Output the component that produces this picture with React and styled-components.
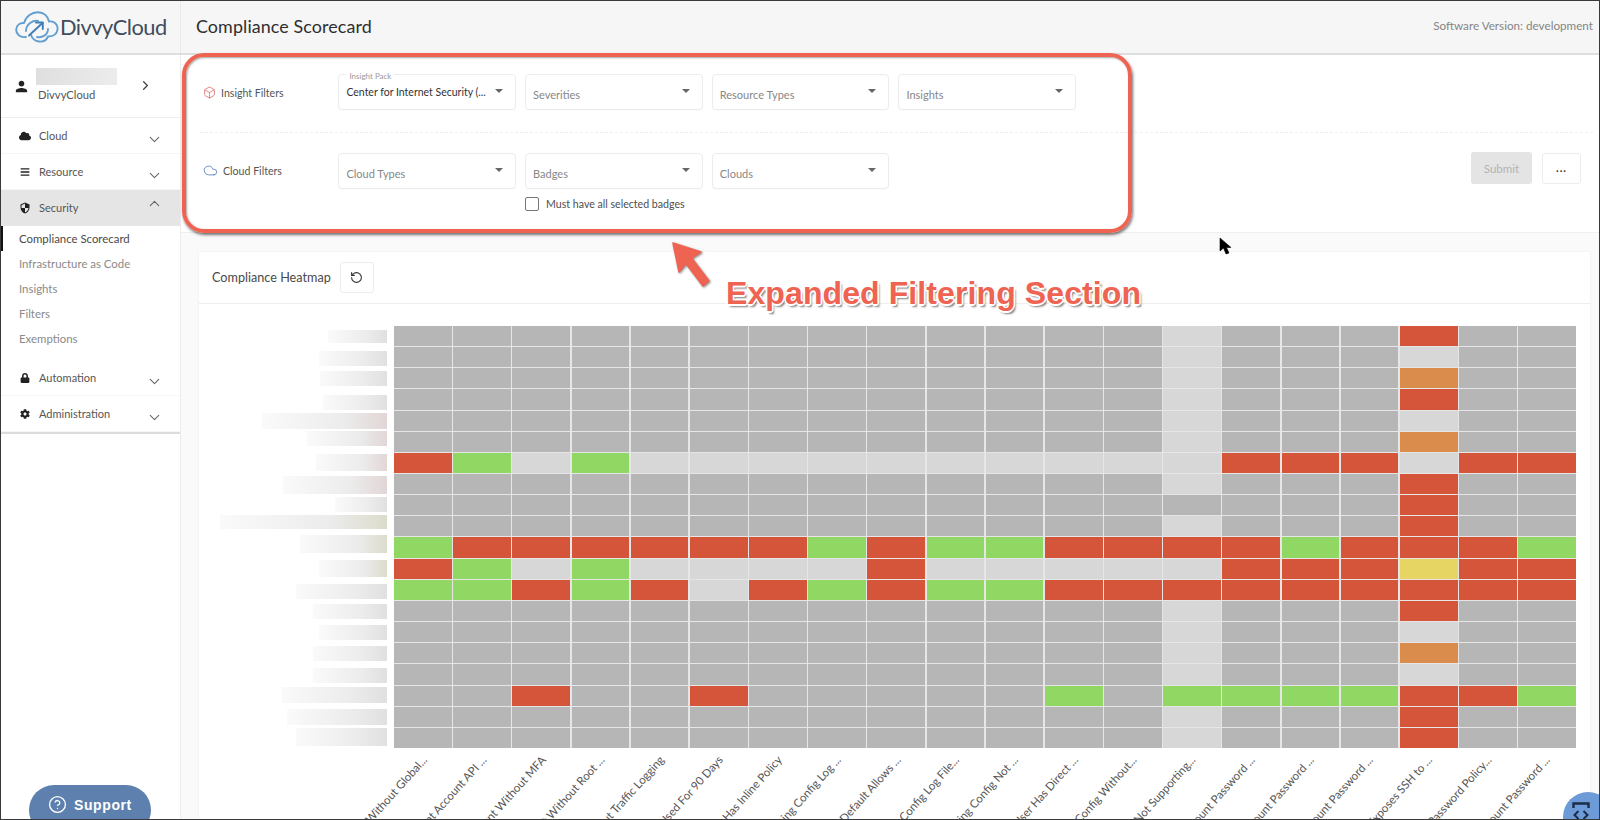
import React from 'react';
import styled, { createGlobalStyle } from 'styled-components';
import { ChevronDown, ChevronUp, ChevronRight, RotateCcw, Cloud as CloudOutline, Box, CircleHelp } from 'lucide-react';
import { FaCloud, FaBars, FaLock, FaCog } from 'react-icons/fa';
import { MdPerson, MdSecurity } from 'react-icons/md';

const Global = createGlobalStyle`
  html, body { margin: 0; padding: 0; width: 1600px; height: 820px; overflow: hidden; background: #fff; }
  * { box-sizing: border-box; }
  body { font-family: Lato, "Open Sans", sans-serif; color: #444; }
`;

const Frame = styled.div`
  position: relative; width: 1600px; height: 820px; border: 1px solid #3a3a3a; overflow: hidden;
  display: flex; flex-direction: column; background: #fff;
`;
const Header = styled.header`
  height: 54px; flex: none; display: flex; align-items: center; background: #f6f6f6; border-bottom: 2px solid #dedede;
`;
const Brand = styled.div`
  width: 180px; height: 100%; flex: none; display: flex; align-items: center; padding-left: 14px; gap: 1px;
  border-right: 1px solid #e9e9e9;
`;
const LogoMark = styled.svg`flex: none;`;
const BrandName = styled.span`
  font-size: 21.8px; letter-spacing: -0.5px; color: #414c5c; line-height: 1;
`;
const PageTitle = styled.h1`
  margin: 0 0 2px 15px; font-size: 17.9px; font-weight: 400; color: #2f2f2f; letter-spacing: .1px;
`;
const Version = styled.span`
  margin-left: auto; margin-right: 6px; margin-bottom: 4px; font-size: 11.7px; color: #858585;
`;
const Body = styled.div`flex: 1; display: flex; min-height: 0;`;
const Sidebar = styled.nav`
  width: 180px; flex: none; border-right: 1px solid #ececec; background: #fff; display: flex; flex-direction: column;
`;
const UserBlock = styled.div`
  height: 63px; flex: none; display: flex; align-items: center; padding: 0 0 0 12px; border-bottom: 1px solid #ededed;
`;
const UserInfo = styled.div`margin-left: 5px; display: flex; flex-direction: column; width: 97px; margin-top: -3px;`;
const NameMask = styled.div`
  width: 81px; height: 17px; margin-left: 1px; background: linear-gradient(to right, #dfdfdf, #ececec);
`;
const OrgName = styled.div`font-size: 11.2px; color: #555; margin: 3px 0 0 3px;`;
const UserChevron = styled.span`display: flex; margin: -2px 0 0 6px; color: #444;`;
const MenuList = styled.div`border-bottom: 2px solid #dcdcdc; display: flex; flex-direction: column;`;
const MenuRow = styled.div`
  height: 36px; display: flex; align-items: center; padding-left: 18px; font-size: 11px; color: #555;
  background: ${p => (p.$active ? '#e5e5e5' : '#fff')};
  border-bottom: 1px solid ${p => (p.$active ? '#e5e5e5' : '#f6f6f6')};
`;
const MenuIcon = styled.span`
  width: 12px; display: flex; justify-content: center; color: #222; font-size: 11px;
`;
const MenuText = styled.span`margin-left: 8px; flex: 1;`;
const Chev = styled.span`
  display: flex; margin-right: 17px; color: #666; transform: translateY(${p => (p.$up ? '-4px' : '4px')});
`;
const SubMenu = styled.div`display: flex; flex-direction: column; padding-bottom: 9px;`;
const SubItem = styled.div`
  height: 25px; display: flex; align-items: center; padding-left: 16px; font-size: 11.4px;
  color: ${p => (p.$current ? '#4a4a4a' : '#8a8a8a')};
  border-left: ${p => (p.$current ? '2px solid #111' : '2px solid transparent')};
`;
const Main = styled.main`flex: 1; min-width: 0; display: flex; flex-direction: column;`;
const FilterPanel = styled.section`
  height: 178px; flex: none; padding: 0 6px 0 19px; background: #fff; border-bottom: 1px solid #efefef;
`;
const FilterRow = styled.div`
  display: flex; align-items: flex-start; padding-top: ${p => p.$top}px; padding-bottom: ${p => p.$bottom}px;
  border-bottom: ${p => (p.$divider ? '1px dashed #eeeeee' : 'none')};
`;
const FilterName = styled.div`
  width: 138.4px; flex: none; height: ${p => p.$h}px; display: flex; align-items: center; gap: 5px; padding-left: 3px; font-size: 10.6px; color: #555;
`;
const SelectGrid = styled.div`display: grid; grid-template-columns: repeat(4, 177.7px); column-gap: 9px;`;
const Select = styled.div`
  position: relative; height: 36px; display: flex; align-items: center; padding: 0 12px 0 7px; border: 1px solid #ececec; border-radius: 4px;
  box-shadow: 0 1px 1px rgba(0,0,0,.02); background: #fff;
`;
const SelectText = styled.span`
  flex: 1; min-width: 0; white-space: nowrap; overflow: hidden; font-size: ${p => (p.$filled ? '10.5px' : '11px')};
  color: ${p => (p.$filled ? '#333333' : '#878787')};
  transform: translateY(${p => (p.$filled ? '0' : '2px')});
`;
const Caret = styled.span`
  width: 0; height: 0; flex: none; border-left: 4px solid transparent; border-right: 4px solid transparent; border-top: 4.5px solid #666; margin-bottom: 2px;
`;
const FloatLabel = styled.span`
  position: absolute; left: 7px; top: -3px; padding: 0 3px; font-size: 8px; line-height: 9px; color: #999; background: #fff;
`;
const CheckLine = styled.label`
  grid-column: 2 / span 3; display: flex; align-items: center; gap: 7px; margin-top: 8px; font-size: 10.6px; color: #4d4d4d;
`;
const CheckBox = styled.span`
  width: 14px; height: 14px; border: 1.5px solid #777; border-radius: 2px; background: #fff; flex: none;
`;
const Actions = styled.div`
  margin-left: auto; margin-right: 12px; margin-top: -1px; display: flex; align-items: flex-start; gap: 10px;
`;
const SubmitButton = styled.button`
  width: 61px; height: 32px; border: none; border-radius: 3px; background: #e4e4e4; color: #b3b3b3; font: 400 11.5px Lato, sans-serif; padding: 0;
`;
const MoreButton = styled.button`
  width: 39px; height: 31px; margin-top: 1px; border: 1px solid #ececec; border-radius: 3px; background: #fff; color: #333; font: 700 11px Lato, sans-serif; padding: 0 0 2px; letter-spacing: 1px;
`;
const Gutter = styled.div`flex: 1; min-height: 0; padding: 19px 9px 0 18px; background: #fafafa;`;
const Card = styled.section`
  height: 100%; background: #fff; box-shadow: 0 0 2px rgba(0,0,0,.07); display: flex; flex-direction: column;
`;
const CardHeader = styled.div`
  height: 52px; flex: none; display: flex; align-items: center; padding-left: 13px; gap: 9px; border-bottom: 1px solid #eeeeee;
`;
const CardTitle = styled.h2`margin: 0; font-size: 12.65px; font-weight: 400; color: #4a4a4a;`;
const IconButton = styled.button`
  width: 34px; height: 31px; display: flex; align-items: center; justify-content: center; padding: 0; border: 1px solid #ececec; border-radius: 3px; background: #fff; color: #333;
`;
const HeatRow = styled.div`display: flex; padding-top: 22px;`;
const BarColumn = styled.div`
  width: 195px; height: 422px; flex: none; padding-right: 7px; display: flex; flex-direction: column; align-items: flex-end;
`;
const MaskBar = styled.div`
  flex: none; width: ${p => p.$w}px; height: ${p => p.$h}px; margin-top: ${p => p.$gap}px;
  background: linear-gradient(to right, #fafafa, #ececec 65%, ${p => p.$end});
`;
const HeatGrid = styled.div`
  width: 1182px; height: 422px; flex: none; display: grid; grid-template-columns: repeat(20, 1fr); grid-template-rows: repeat(20, 1fr);
  column-gap: 1.5px; row-gap: 1px; background: #e6e6e6;
`;
const COLORS = { G: '#b6b6b6', L: '#d7d7d7', R: '#d5553b', V: '#90d863', O: '#d98c4c', Y: '#e6d562' };
const Cell = styled.div`background: ${p => COLORS[p.$c]};`;
const AxisRow = styled.div`display: flex; margin-left: 195px; width: 1182px;`;
const AxisCell = styled.div`
  flex: 1 1 0; min-width: 0; height: 70px; display: flex; justify-content: flex-end; padding: 5px 33px 0 0;
`;
const AxisText = styled.span`
  flex: none; white-space: nowrap; font-size: 11.5px; line-height: 14px; height: 14px; color: #555;
  transform-origin: 100% 0; transform: rotate(-48deg);
`;
const Annotation = styled.div`
  position: absolute; left: 181px; top: 52px; width: 950px; height: 180px; border: 4px solid #ee6352; border-radius: 22px;
  box-shadow: 1px 2px 3px rgba(0,0,0,.55), inset 1px 1px 2px rgba(0,0,0,.35); pointer-events: none;
`;
const Callout = styled.div`
  position: absolute; left: 725px; top: 274px; font: 700 32px "Liberation Sans", Arial, sans-serif; color: #ee6352; white-space: nowrap; letter-spacing: .1px;
  text-shadow: -1.5px 0 #fff, 1.5px 0 #fff, 0 -1.5px #fff, 0 1.5px #fff, -1px -1px #fff, 1px -1px #fff, -1px 1px #fff, 1px 1px #fff, 2px 3px 2px rgba(0,0,0,.5);
`;
const ArrowMark = styled.svg`
  position: absolute; left: 666px; top: 237px; filter: drop-shadow(1px 1px 1px rgba(0,0,0,.45));
`;
const CursorMark = styled.svg`position: absolute; left: 1218px; top: 236px;`;
const SupportButton = styled.div`
  position: absolute; left: 28px; top: 784px; width: 122px; height: 50px; border-radius: 25px; background: #5d80ae; color: #fff;
  display: flex; align-items: flex-start; padding: 10px 0 0 19px; gap: 7px; font: 700 14px "Liberation Sans", Arial, sans-serif; letter-spacing: .6px; line-height: 20px;
`;
const CodeBubble = styled.div`
  position: absolute; left: 1562px; top: 791px; width: 50px; height: 50px; border-radius: 50%; background: #6d9bd8; padding: 10px 0 0 8px;
`;

const Logo = () => (
  <LogoMark width="44" height="32" viewBox="0 0 44 32" fill="none" stroke="#629fd0" strokeWidth="1.9" strokeLinecap="round" strokeLinejoin="round">
    <path d="M11 26C5 27 1 23 1.2 18.5 1.5 14 5 11.5 9 12 11 5 17 1 23 1.2 29 1.4 33 5.5 34 10.5 39 9.5 43 13.5 42.6 18 42 23 38.5 25.6 33 25.5 31 30 27 31 24 30.5 20 30 17 27 16 24" />
    <path d="M14 24.5 27.5 12" stroke="#3f7fb8" />
    <path d="M21 11.5 27.8 11.5 27.8 18" stroke="#3f7fb8" />
    <path d="M11 20C11 13 18 9 23 10" />
    <path d="M33 18C33 24 27 27 22 26" />
  </LogoMark>
);

const F = 'G'.repeat(20);
const row = (over = {}, base = F) => base.split('').map((c, i) => over[i] || c);
const withAll = (spec) => {
  const o = {};
  spec.split(' ').forEach((s) => { o[Number(s.slice(1))] = s[0]; });
  return o;
};
const GRID = [
  row(withAll('L13 R17')),
  row(withAll('L13 L17')),
  row(withAll('L13 O17')),
  row(withAll('L13 R17')),
  row(withAll('L13 L17')),
  row(withAll('L13 O17')),
  row(withAll('R0 V1 L2 V3 L4 L5 L6 L7 L8 L9 L10 L11 L12 L13 R14 R15 R16 L17 R18 R19')),
  row(withAll('L13 R17')),
  row(withAll('R17')),
  row(withAll('L13 R17')),
  row(withAll('V0 R1 R2 R3 R4 R5 R6 V7 R8 V9 V10 R11 R12 R13 R14 V15 R16 R17 R18 V19')),
  row(withAll('R0 V1 L2 V3 L4 L5 L6 L7 R8 L9 L10 L11 L12 L13 R14 R15 R16 Y17 R18 R19')),
  row(withAll('V0 V1 R2 V3 R4 L5 R6 V7 R8 V9 V10 R11 R12 R13 R14 R15 R16 R17 R18 R19')),
  row(withAll('L13 R17')),
  row(withAll('L13 L17')),
  row(withAll('L13 O17')),
  row(withAll('L13 L17')),
  row(withAll('R2 R5 V11 V13 V14 V15 V16 R17 R18 V19')),
  row(withAll('L13 R17')),
  row(withAll('L13 R17')),
];
const GREY = '#e0e0e0';
const PINK = '#e2d6d6';
const KHAKI = '#dcdccc';
const BARS = [
  [328, 330, 343, GREY], [319, 351, 366, GREY], [320, 371, 386, GREY], [323, 395, 410, GREY], [262, 413, 429, PINK],
  [307, 431, 446, PINK], [316, 454, 471, PINK], [283, 476, 494, PINK], [335, 497, 512, GREY], [220, 515, 529, KHAKI],
  [300, 535, 553, KHAKI], [319, 560, 577, KHAKI], [296, 584, 599, GREY], [313, 604, 619, GREY], [319, 625, 640, GREY],
  [313, 646, 661, GREY], [313, 668, 683, GREY], [282, 687, 703, GREY], [287, 709, 725, GREY], [296, 728, 746, GREY],
];
const AXIS = [
  'Cloud Account Without Global...', 'Cloud Account Account API ...', 'Root Account Without MFA', 'Cloud Account Without Root ...',
  'Cloud Account Without Traffic Logging', 'Access Key Not Used For 90 Days', 'Cloud User Has Inline Policy', 'Cloud Account Missing Config Log ...',
  'Security Group Default Allows ...', 'Storage Container Config Log File...', 'Cloud Account Missing Config Not ...', 'Cloud Account User Has Direct ...',
  'Cloud Account Config Without...', 'Cloud Account Not Supporting...', 'Cloud Account Password ...', 'Cloud Account Password ...',
  'Cloud Account Password ...', 'Security Group Exposes SSH to ...', 'Cloud Account Password Policy...', 'Cloud Account Password ...',
];
const MENU_TOP = [
  { name: 'Cloud', icon: <FaCloud size={12} /> },
  { name: 'Resource', icon: <FaBars size={10} /> },
];
const SUBS = ['Compliance Scorecard', 'Infrastructure as Code', 'Insights', 'Filters', 'Exemptions'];

export default function App() {
  let prev = 326;
  return (
    <Frame>
      <Global />
      <Header>
        <Brand>
          <Logo />
          <BrandName>DivvyCloud</BrandName>
        </Brand>
        <PageTitle>Compliance Scorecard</PageTitle>
        <Version>Software Version: development</Version>
      </Header>
      <Body>
        <Sidebar>
          <UserBlock>
            <MdPerson size={17} color="#222" />
            <UserInfo>
              <NameMask />
              <OrgName>DivvyCloud</OrgName>
            </UserInfo>
            <UserChevron><ChevronRight size={15} strokeWidth={2} /></UserChevron>
          </UserBlock>
          <MenuList>
            {MENU_TOP.map((m) => (
              <MenuRow key={m.name}>
                <MenuIcon>{m.icon}</MenuIcon>
                <MenuText>{m.name}</MenuText>
                <Chev><ChevronDown size={17} strokeWidth={1.5} /></Chev>
              </MenuRow>
            ))}
            <MenuRow $active>
              <MenuIcon><MdSecurity size={12} /></MenuIcon>
              <MenuText>Security</MenuText>
              <Chev $up><ChevronUp size={17} strokeWidth={1.5} /></Chev>
            </MenuRow>
            <SubMenu>
              {SUBS.map((s, i) => <SubItem key={s} $current={i === 0}>{s}</SubItem>)}
            </SubMenu>
            <MenuRow>
              <MenuIcon><FaLock size={10} /></MenuIcon>
              <MenuText>Automation</MenuText>
              <Chev><ChevronDown size={17} strokeWidth={1.5} /></Chev>
            </MenuRow>
            <MenuRow>
              <MenuIcon><FaCog size={10} /></MenuIcon>
              <MenuText>Administration</MenuText>
              <Chev><ChevronDown size={17} strokeWidth={1.5} /></Chev>
            </MenuRow>
          </MenuList>
        </Sidebar>
        <Main>
          <FilterPanel>
            <FilterRow $top={19} $bottom={21} $divider>
              <FilterName $h={37}><Box size={13} color="#d9706b" strokeWidth={1.5} />Insight Filters</FilterName>
              <SelectGrid>
                <Select>
                  <FloatLabel>Insight Pack</FloatLabel>
                  <SelectText $filled>Center for Internet Security (...</SelectText>
                  <Caret />
                </Select>
                <Select><SelectText>Severities</SelectText><Caret /></Select>
                <Select><SelectText>Resource Types</SelectText><Caret /></Select>
                <Select><SelectText>Insights</SelectText><Caret /></Select>
              </SelectGrid>
            </FilterRow>
            <FilterRow $top={20} $bottom={0}>
              <FilterName $h={35}><CloudOutline size={15} color="#5d87c6" strokeWidth={1.4} />Cloud Filters</FilterName>
              <SelectGrid>
                <Select><SelectText>Cloud Types</SelectText><Caret /></Select>
                <Select><SelectText>Badges</SelectText><Caret /></Select>
                <Select><SelectText>Clouds</SelectText><Caret /></Select>
                <span />
                <CheckLine><CheckBox />Must have all selected badges</CheckLine>
              </SelectGrid>
              <Actions>
                <SubmitButton>Submit</SubmitButton>
                <MoreButton>...</MoreButton>
              </Actions>
            </FilterRow>
          </FilterPanel>
          <Gutter>
            <Card>
              <CardHeader>
                <CardTitle>Compliance Heatmap</CardTitle>
                <IconButton><RotateCcw size={13} strokeWidth={2} /></IconButton>
              </CardHeader>
              <HeatRow>
                <BarColumn>
                  {BARS.map(([x, y1, y2, end], i) => {
                    const gap = y1 - prev;
                    prev = y2;
                    return <MaskBar key={i} $w={387 - x} $h={y2 - y1} $gap={gap} $end={end} />;
                  })}
                </BarColumn>
                <HeatGrid>
                  {GRID.flatMap((r, y) => r.map((c, x) => <Cell key={`${y}-${x}`} $c={c} />))}
                </HeatGrid>
              </HeatRow>
              <AxisRow>
                {AXIS.map((t, i) => <AxisCell key={i}><AxisText>{t}</AxisText></AxisCell>)}
              </AxisRow>
            </Card>
          </Gutter>
        </Main>
      </Body>
      <Annotation />
      <ArrowMark width="50" height="55" viewBox="0 0 50 55">
        <polygon points="6,5 34,14 24.5,20 42,43 36,48 19,25.5 12,34" fill="#ee6352" stroke="#ee6352" strokeWidth="1.5" strokeLinejoin="round" />
      </ArrowMark>
      <Callout>Expanded Filtering Section</Callout>
      <CursorMark width="14" height="19" viewBox="0 0 14 19">
        <path d="M1 1 L1 14 L4.5 11 L7 17 L10 16 L7.5 10.5 L12 10.5 Z" fill="#000" stroke="#000" strokeWidth="0.6" />
      </CursorMark>
      <SupportButton>
        <CircleHelp size={19} strokeWidth={1.7} />
        Support
      </SupportButton>
      <CodeBubble>
        <svg width="20" height="22" viewBox="0 0 20 22" fill="none" stroke="#1d2c48" strokeWidth="2">
          <path d="M2.5 6V1.5H17.5V6" strokeWidth="2.4" />
          <path d="M7.5 9 3.5 13 7.5 17M12.5 9 16.5 13 12.5 17" />
          <path d="M2.5 20V21.5H17.5V20" strokeWidth="2.4" />
        </svg>
      </CodeBubble>
    </Frame>
  );
}
